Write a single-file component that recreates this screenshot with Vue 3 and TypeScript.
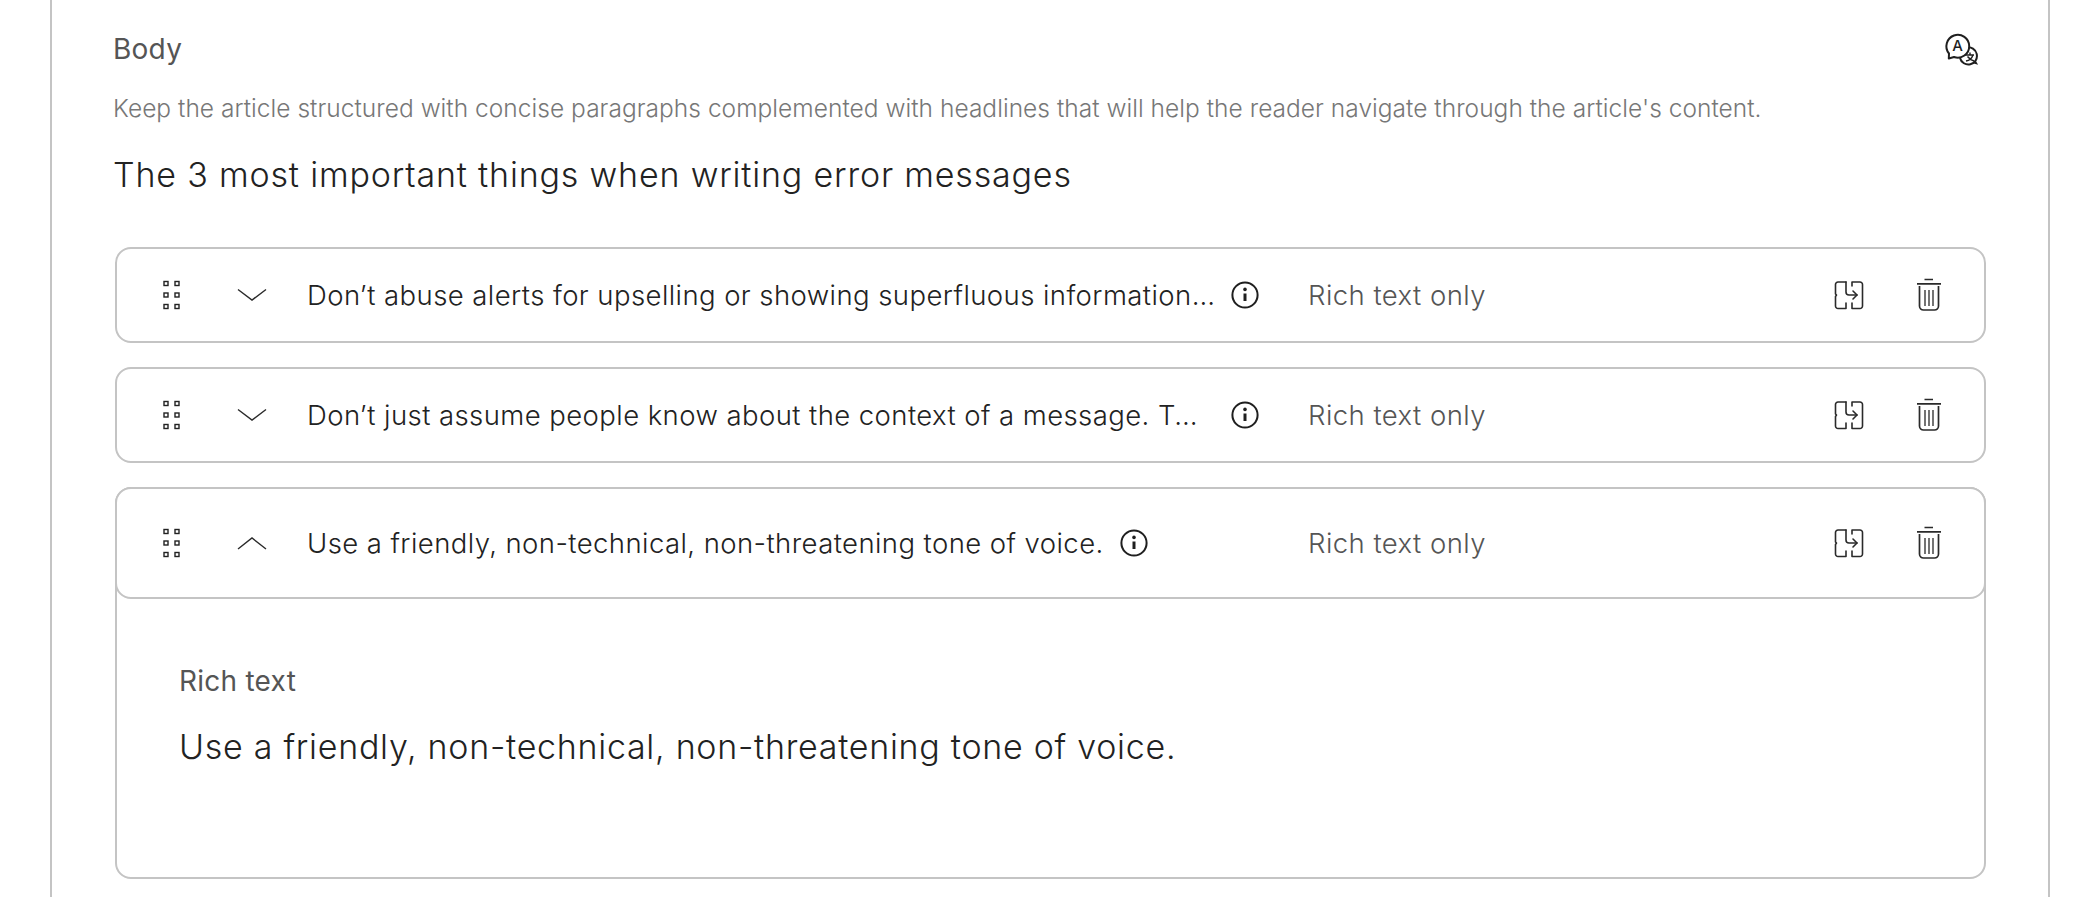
<script setup lang="ts">
interface Row {
  text: string;
  open: boolean;
}
const rows: Row[] = [
  { text: "Don’t abuse alerts for upselling or showing superfluous information and other things that interrupt people", open: false },
  { text: "Don’t just assume people know about the context of a message. Two things matter here: what happened and why", open: false },
  { text: "Use a friendly, non-technical, non-threatening tone of voice.", open: true },
];
const dots = [
  [0, 0], [11, 0], [0, 11.5], [11, 11.5], [0, 23], [11, 23],
];
</script>

<template>
  <div class="page">
    <section class="panel">
      <div class="field-head">
        <span class="label">Body</span>
        <svg class="translate" width="36" height="36" viewBox="0 0 36 36" fill="none" stroke="#1f1f1f" stroke-width="2">
          <path d="M22.500 17.500 A8.600 8.600 0 1 1 16 28" />
          <path d="M31 31 L32.500 33.500 L29 32.500" stroke-width="1.500" />
          <path d="M5 23.500 A11.400 11.400 0 1 1 10 27 L4.800 28.500 Z" fill="#fff" stroke-linejoin="round" />
          <path d="M21 25 H30 M26 22.500 V25 M29 25 C28 28 25 30.500 22 31 M23.500 26.500 C25 28.500 27 30 30 31" stroke-width="1.400" />
          <text x="13.500" y="20.500" text-anchor="middle" class="glyph">A</text>
        </svg>
      </div>
      <p class="help">Keep the article structured with concise paragraphs complemented with headlines that will help the reader navigate through the article's content.</p>
      <h2 class="title">The 3 most important things when writing error messages</h2>

      <div class="list">
        <article v-for="row in rows" :key="row.text" class="card" :class="{ open: row.open }">
          <header class="row">
            <svg class="drag" width="18" height="30" viewBox="0 0 18 30" fill="none" stroke="#222" stroke-width="1.400">
              <rect v-for="d in dots" :key="d.join()" :x="d[0] + 1" :y="d[1] + 1.500" width="4" height="4" />
            </svg>
            <svg class="chev" width="32" height="14" viewBox="0 0 32 14" fill="none" stroke="#2a2a2a" stroke-width="1.400">
              <path v-if="row.open" d="M2 13 L16 2 L30 13" />
              <path v-else d="M2 1.500 L16 12 L30 1.500" />
            </svg>
            <div class="name">
              <span class="name-text">{{ row.text }}</span>
              <svg class="info" width="28" height="28" viewBox="0 0 28 28" fill="none" stroke="#1f1f1f" stroke-width="2">
                <circle cx="14" cy="14" r="12.600" />
                <path d="M14 12.500 V20" stroke-width="3" />
                <circle cx="14" cy="8.400" r="1.800" fill="#1f1f1f" stroke="none" />
              </svg>
            </div>
            <span class="kind">Rich text only</span>
            <div class="actions">
              <svg width="30" height="30" viewBox="0 0 30 30" fill="none" stroke="#2a2a2a" stroke-width="1.600" stroke-linejoin="round" stroke-linecap="round">
                <path d="M12 2 H4 a2.500 2.500 0 0 0 -2.500 2.500 V14 L2.500 15 L1.500 16.500 V26 a2.500 2.500 0 0 0 2.500 2.500 H12 V23" />
                <path d="M12 2 V12 a3 3 0 0 0 3 3 H23" />
                <path d="M19 11 L23 15 L19 19" />
                <path d="M18 6 V2 H26 a2.500 2.500 0 0 1 2.500 2.500 V26 a2.500 2.500 0 0 1 -2.500 2.500 H18 V23" />
              </svg>
              <svg width="26" height="34" viewBox="0 0 26 34" fill="none" stroke="#2a2a2a" stroke-width="1.700">
                <path d="M8.500 1.500 H17 M1 5.800 H25" />
                <path d="M3.500 8 V28 a4 4 0 0 0 4 4 H18.500 a4 4 0 0 0 4 -4 V8" />
                <path d="M9 12 V28 M13 12 V28 M17 12 V28" stroke-width="1.300" />
              </svg>
            </div>
          </header>
          <div v-if="row.open" class="content">
            <span class="label small">Rich text</span>
            <p class="value">{{ row.text }}</p>
          </div>
        </article>
      </div>
    </section>
  </div>
</template>

<style>
html, body { margin: 0; background: #fff; overflow: hidden; }
</style>

<style scoped>
.page {
  height: 897px;
  padding-left: 50px;
  box-sizing: border-box;
  font-family: Inter, "Liberation Sans", sans-serif;
  overflow: hidden;
}
.panel {
  width: 2000px;
  height: 897px;
  box-sizing: border-box;
  border-left: 2px solid #c4c4c4;
  border-right: 2px solid #c4c4c4;
  padding: 0 62px 0 61px;
}
.field-head {
  height: 98px;
  display: flex;
  justify-content: space-between;
  align-items: center;
}
.translate { margin-right: 6px; margin-top: -2px; }
.glyph { font: 500 15px Inter, sans-serif; fill: #1f1f1f; stroke: none; }
.label {
  font-size: 28px;
  letter-spacing: 0.25px;
  line-height: 32px;
  color: #555;
}
.label.small { display: block; }
.help {
  margin: -2px 0 0;
  font-size: 24.500px;
  letter-spacing: 0.03px;
  line-height: 24px;
  color: #777;
  font-weight: 300;
}
.title {
  margin: 35px 0 0;
  font-size: 34px;
  letter-spacing: 0.82px;
  font-weight: 300;
  line-height: 40px;
  color: #222;
}
.list {
  margin: 52px 0 0 2px;
  display: flex;
  flex-direction: column;
  gap: 24px;
}
.card {
  border-radius: 16px;
}
.card.open {
  border: 2px solid #c4c4c4;
  height: 392px;
  box-sizing: border-box;
}
.row {
  height: 96px;
  box-sizing: border-box;
  border: 2px solid #c4c4c4;
  border-radius: 16px;
  display: flex;
  align-items: center;
  padding-left: 46px;
}
.open .row {
  height: 112px;
  margin: -2px;
  background: #fff;
}
.drag { flex: none; }
.chev { flex: none; margin-left: 55px; }
.name {
  flex: none;
  width: 999px;
  margin-left: 39px;
  display: flex;
  align-items: center;
  gap: 16px;
  min-width: 0;
}
.name-text {
  max-width: 908px;
  white-space: nowrap;
  overflow: hidden;
  text-overflow: ellipsis;
  font-size: 27.500px;
  letter-spacing: 0.42px;
  font-weight: 300;
  line-height: 36px;
  color: #222;
}
.kind {
  font-size: 27.500px;
  letter-spacing: 0.45px;
  font-weight: 300;
  color: #555;
  margin-left: 2px;
}
.actions {
  margin-left: auto;
  margin-right: 42px;
  display: flex;
  align-items: center;
  gap: 52px;
}
.content {
  padding: 68px 62px 0;
}
.value {
  margin: 28px 0 0;
  font-size: 34px;
  letter-spacing: 0.72px;
  font-weight: 300;
  line-height: 44px;
  color: #222;
}
</style>
